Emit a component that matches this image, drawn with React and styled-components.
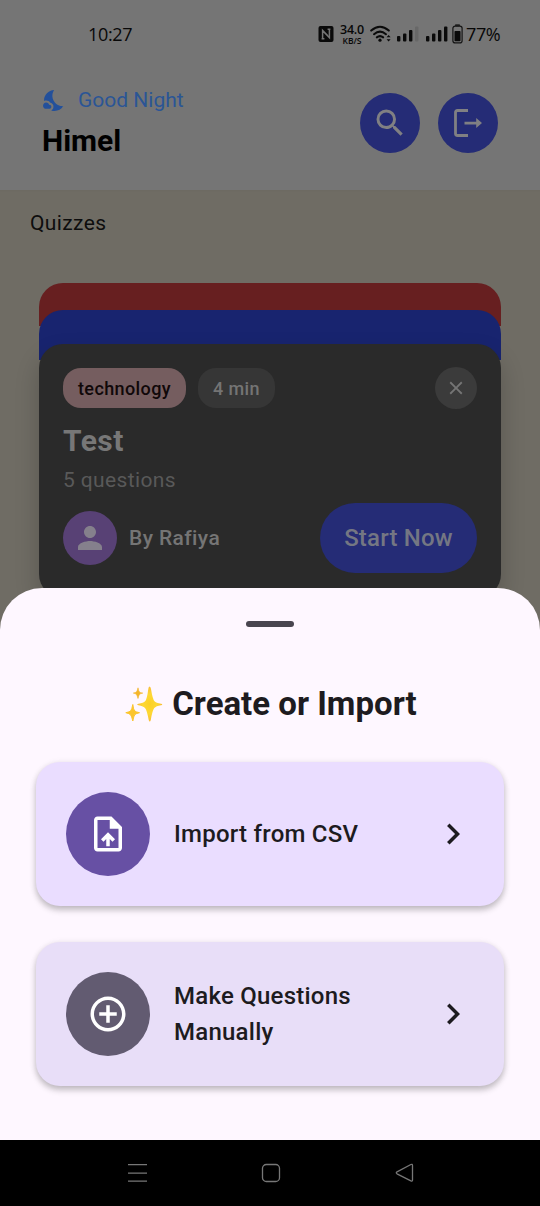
import React from "react";
import styled, { createGlobalStyle } from "styled-components";
import {
  MdSearch, MdNightsStay, MdPerson, MdClose,
  MdOutlineUploadFile, MdAddCircleOutline, MdChevronRight,
} from "react-icons/md";

const GlobalStyle = createGlobalStyle`
  * { box-sizing: border-box; }
  body { margin: 0; font-family: Roboto, "Liberation Sans", sans-serif; }
  svg { display: block; flex: none; }
`;

const Screen = styled.div`
  position: relative;
  width: 540px;
  height: 1206px;
  overflow: hidden;
  display: flex;
  flex-direction: column;
  background: #6f6c64;
`;

const Top = styled.header`
  height: 190px;
  flex: none;
  background: #757575;
  box-shadow: 0 0 3px rgba(0, 0, 0, 0.05);
`;

const StatusBar = styled.div`
  height: 68px;
  padding: 0 38px 0 88px;
  display: flex;
  align-items: center;
  justify-content: space-between;
  color: #080808;
`;

const Clock = styled.span`
  font: 500 18px/24px "Open Sans", Roboto, sans-serif;
  letter-spacing: -0.35px;
`;

const StatusIcons = styled.div`
  display: flex;
  align-items: center;
`;

const Speed = styled.div`
  width: 28px;
  margin: 1px 4px 0;
  display: flex;
  flex-direction: column;
  align-items: center;
  white-space: nowrap;
  font: 600 12.5px/12px "Open Sans", Roboto, sans-serif;
  letter-spacing: -0.2px;
`;

const SpeedUnit = styled.span`
  font-size: 8.5px;
  line-height: 9px;
  letter-spacing: 0;
`;

const Signals = styled.div`
  display: flex;
  gap: 7px;
  margin: 0 4px 0 5px;
`;

const Percent = styled.span`
  width: 36px;
  margin-left: 3px;
  white-space: nowrap;
  font: 400 18px/24px "Open Sans", Roboto, sans-serif;
  letter-spacing: -0.4px;
`;

const Greeting = styled.div`
  display: flex;
  justify-content: space-between;
  padding: 18px 42px 0;
`;

const GreetingLine = styled.div`
  display: flex;
  align-items: center;
  gap: 11px;
  height: 29px;
  color: #23509b;
  font-size: 21px;
  line-height: 29px;
  svg { margin-bottom: 1px; }
  span { color: #2b5595; }
`;

const UserName = styled.div`
  margin-top: 8px;
  color: #000;
  font-size: 30px;
  line-height: 36px;
  font-weight: 700;
`;

const HeaderActions = styled.div`
  display: flex;
  gap: 18px;
  padding-top: 6.5px;
`;

const RoundButton = styled.button`
  width: 60px;
  height: 60px;
  padding: 0;
  border: 0;
  border-radius: 50%;
  display: grid;
  place-items: center;
  background: #252c76;
  color: #808083;
`;

const SectionTitle = styled.h2`
  margin: 17px 0 0 30px;
  color: #0d0d0d;
  font-size: 21px;
  line-height: 32px;
  font-weight: 400;
  letter-spacing: 0.38px;
`;

const Deck = styled.div`
  margin: 44px 39px 0;
  display: flex;
  flex-direction: column;
`;

const DeckLayer = styled.div`
  height: ${(p) => p.$height}px;
  margin-bottom: ${(p) => p.$visible - p.$height}px;
  border-radius: 24px 24px 0 0;
  background: ${(p) => p.$color};
`;

const QuizCard = styled.article`
  height: 254px;
  padding: 23px 24px;
  border-radius: 24px;
  background: #2a2a2a;
  box-shadow: 0 12px 24px rgba(0, 0, 0, 0.2);
`;

const CardHead = styled.div`
  display: flex;
  align-items: center;
  gap: 12px;
`;

const Tag = styled.span`
  width: ${(p) => p.$width}px;
  height: 40px;
  border-radius: 18px;
  text-align: center;
  font-size: 18px;
  line-height: 41px;
  font-weight: 500;
  letter-spacing: 0.4px;
  color: ${(p) => (p.$muted ? "#747474" : "#100809")};
  background: ${(p) => (p.$muted ? "#363636" : "#755d5f")};
`;

const CloseButton = styled.button`
  width: 42px;
  height: 42px;
  margin-left: auto;
  padding: 0;
  border: 0;
  border-radius: 50%;
  display: grid;
  place-items: center;
  background: #3b3b3b;
  color: #757575;
`;

const QuizTitle = styled.h3`
  margin: 12px 0 0;
  color: #777;
  font-size: 30px;
  line-height: 40px;
  font-weight: 700;
  letter-spacing: 0.45px;
`;

const QuizMeta = styled.p`
  margin: 4px 0 0;
  color: #595959;
  font-size: 21px;
  line-height: 30px;
  letter-spacing: 0.38px;
`;

const CardFoot = styled.div`
  display: flex;
  align-items: center;
  margin-top: 8px;
`;

const Avatar = styled.div`
  width: 54px;
  height: 54px;
  border-radius: 50%;
  display: grid;
  place-items: center;
  background: #584175;
  color: #85808c;
`;

const Author = styled.span`
  margin-left: 12px;
  color: #757575;
  font-size: 21px;
  font-weight: 500;
  letter-spacing: 0.4px;
`;

const StartButton = styled.button`
  width: 157px;
  height: 70px;
  margin-left: auto;
  padding: 0;
  border: 0;
  border-radius: 35px;
  background: #252c76;
  color: #747783;
  font: 500 24px/70px Roboto, sans-serif;
  letter-spacing: 0.2px;
`;

const Sheet = styled.section`
  position: absolute;
  left: 0;
  right: 0;
  bottom: 66px;
  height: 552px;
  padding: 33px 36px 0;
  border-radius: 42px 42px 0 0;
  background: #fef7ff;
`;

const Handle = styled.div`
  width: 48px;
  height: 6px;
  margin: 0 auto;
  border-radius: 3px;
  background: #49454f;
`;

const SheetTitle = styled.h1`
  margin: 56px 0 37px;
  padding-left: 2px;
  display: flex;
  justify-content: center;
  align-items: center;
  gap: 9px;
  color: #1d1b20;
  font-size: 33px;
  line-height: 42px;
  font-weight: 700;
`;

const Option = styled.button`
  width: 100%;
  height: 144px;
  margin: 0 0 36px;
  padding: 0 30px;
  border: 0;
  border-radius: 24px;
  display: flex;
  align-items: center;
  text-align: left;
  background: ${(p) => p.$bg};
  color: #1d1b20;
  box-shadow: 0 4px 6px rgba(0, 0, 0, 0.22), 0 1px 7px rgba(0, 0, 0, 0.08);
`;

const OptionIcon = styled.span`
  width: 84px;
  height: 84px;
  flex: none;
  border-radius: 50%;
  display: grid;
  place-items: center;
  background: ${(p) => p.$bg};
  color: #fff;
`;

const OptionLabel = styled.span`
  flex: 1;
  padding: 0 24px 1px;
  font: 500 24px/36px Roboto, sans-serif;
  letter-spacing: 0.24px;
`;

const NavBar = styled.nav`
  position: absolute;
  left: 0;
  right: 0;
  bottom: 0;
  height: 66px;
  padding: 0 125px 0 127px;
  display: flex;
  align-items: center;
  justify-content: space-between;
  background: #000;
`;

const Nfc = () => (
  <svg width="16" height="16" viewBox="0 0 16 16">
    <rect x="0.500" width="15" height="16" rx="2" fill="#0a0a0a" />
    <path d="M4.600 12.800V4.300l5 5.200M11.400 3.200v8.500l-5-5.200M3.600 12.800h2.800M9.600 3.200h2.800" fill="none" stroke="#757575" strokeWidth="1.500" />
  </svg>
);

const Wifi = () => (
  <svg width="22" height="18" viewBox="0 0 22 18">
    <g fill="none" stroke="#0a0a0a" strokeWidth="2" strokeLinecap="round">
      <path d="M1.200 5.600Q10 -2.200 18.800 5.600" />
      <path d="M4 9.200Q10 4 16 9.200" />
      <path d="M6.800 12.400Q10 9.800 13.200 12.400" />
    </g>
    <circle cx="10" cy="15.200" r="1.600" fill="#0a0a0a" />
    <path d="M16.600 12.200l2-2.300 2 2.300zM16.600 14.300l2 2.300 2-2.300z" fill="#0a0a0a" />
  </svg>
);

const Signal = ({ bars }) => (
  <svg width="22" height="16" viewBox="0 0 22 16">
    {[10, 7.5, 4, 0.5].map((y, i) => (
      <rect key={y} x={i * 6} y={y} width="3.4" height={15.5 - y} rx="1" fill={i < bars ? "#0a0a0a" : "#686868"} />
    ))}
  </svg>
);

const Battery = () => (
  <svg width="11" height="20" viewBox="0 0 11 20">
    <rect x="3" y="0.300" width="5" height="2" rx="0.800" fill="#222" />
    <rect x="0.900" y="2.100" width="9.200" height="16.800" rx="2.200" fill="none" stroke="#151515" strokeWidth="1.200" />
    <rect x="2.500" y="7" width="6" height="10.300" rx="0.800" fill="#0a0a0a" />
  </svg>
);

const Logout = () => (
  <svg width="30" height="30" viewBox="0 0 30 30">
    <path d="M15 2.500H4.500Q2.500 2.500 2.500 4.500V25.500Q2.500 27.500 4.500 27.500H15" fill="none" stroke="#808083" strokeWidth="2.800" />
    <path d="M11.500 13.700h11.700V10l5.800 5.100-5.800 5v-3.600H11.500z" fill="#808083" />
  </svg>
);

const Sparkles = () => (
  <svg width="38" height="38" viewBox="0 0 38 38">
    <defs>
      <radialGradient id="gold">
        <stop offset="0" stopColor="#fbd027" />
        <stop offset="0.55" stopColor="#fdd835" />
        <stop offset="1" stopColor="#f8bd35" />
      </radialGradient>
    </defs>
    <path d="M24.500 1.500Q25.600 1.500 26 4Q27.700 14.500 29.500 16.300Q31 18 36 18.700Q38.500 19.400 36 20.200Q31 21 29.300 23Q27.300 25.500 25.800 35Q24.700 38 23.700 35Q22 25.500 20.200 23.200Q18.500 21 13.500 20.200Q11 19.400 13.500 18.700Q18.500 18 20.300 16Q22 14 23.300 4Q23.600 1.500 24.500 1.500Z" fill="url(#gold)" />
    <path d="M7.800 19.500Q8.500 25 9.800 26Q11 27 14.500 27.700Q11 28.500 9.800 29.600Q8.700 31 7.800 36Q6.700 31 5.500 29.700Q4.500 28.500 .8 27.700Q4.500 27 5.700 25.800Q6.900 24.500 7.800 19.500Z" fill="#fbc52d" stroke="#fbc52d" strokeWidth="1" strokeLinejoin="round" />
    <path d="M13 2.800Q13.700 6.300 14.500 7Q15.300 7.800 17.800 8.100Q15.300 8.600 14.500 9.400Q13.700 10.300 13 13.500Q12.200 10.300 11.400 9.400Q10.500 8.500 8.300 8.100Q10.700 7.700 11.500 6.800Q12.300 6 13 2.800Z" fill="#f4b52b" stroke="#f4b52b" strokeWidth=".6" strokeLinejoin="round" />
  </svg>
);

const MenuKey = () => (
  <svg width="20" height="20" viewBox="0 0 20 20" fill="none" stroke="#777" strokeWidth="1.300">
    <path d="M1 1.700h19M1 10.200h19M1 18.200h19" />
  </svg>
);

const HomeKey = () => (
  <svg width="20" height="20" viewBox="0 0 20 20" fill="none" stroke="#777" strokeWidth="1.300">
    <rect x="1.500" y="1.500" width="17" height="17" rx="3.800" />
  </svg>
);

const BackKey = () => (
  <svg width="20" height="20" viewBox="0 0 20 20" fill="none" stroke="#777" strokeWidth="1.300" strokeLinejoin="round">
    <path d="M15.900 1.500Q17.500 .8 17.500 2.500V17Q17.500 18.600 15.900 17.900L2 10.800Q.6 9.800 2 8.800Z" />
  </svg>
);

export default function App() {
  return (
    <Screen>
      <GlobalStyle />
      <Top>
        <StatusBar>
          <Clock>10:27</Clock>
          <StatusIcons>
            <Nfc />
            <Speed><span>34.0</span><SpeedUnit>KB/S</SpeedUnit></Speed>
            <Wifi />
            <Signals>
              <Signal bars={3} />
              <Signal bars={4} />
            </Signals>
            <Battery />
            <Percent>77%</Percent>
          </StatusIcons>
        </StatusBar>
        <Greeting>
          <div>
            <GreetingLine><MdNightsStay size={25} /><span>Good Night</span></GreetingLine>
            <UserName>Himel</UserName>
          </div>
          <HeaderActions>
            <RoundButton aria-label="Search"><MdSearch size={36} /></RoundButton>
            <RoundButton aria-label="Log out"><Logout /></RoundButton>
          </HeaderActions>
        </Greeting>
      </Top>
      <SectionTitle>Quizzes</SectionTitle>
      <Deck>
        <DeckLayer $color="#671f20" $height={43} $visible={27} />
        <DeckLayer $color="#18246f" $height={50} $visible={34} />
        <QuizCard>
          <CardHead>
            <Tag $width={123}>technology</Tag>
            <Tag $width={77} $muted>4 min</Tag>
            <CloseButton aria-label="Close"><MdClose size={22} /></CloseButton>
          </CardHead>
          <QuizTitle>Test</QuizTitle>
          <QuizMeta>5 questions</QuizMeta>
          <CardFoot>
            <Avatar><MdPerson size={36} /></Avatar>
            <Author>By Rafiya</Author>
            <StartButton>Start Now</StartButton>
          </CardFoot>
        </QuizCard>
      </Deck>
      <Sheet>
        <Handle />
        <SheetTitle><Sparkles />Create or Import</SheetTitle>
        <Option $bg="#eaddff">
          <OptionIcon $bg="#6750a4"><MdOutlineUploadFile size={42} /></OptionIcon>
          <OptionLabel>Import from CSV</OptionLabel>
          <MdChevronRight size={42} />
        </Option>
        <Option $bg="#e8def8">
          <OptionIcon $bg="#625b71"><MdAddCircleOutline size={42} /></OptionIcon>
          <OptionLabel>Make Questions Manually</OptionLabel>
          <MdChevronRight size={42} />
        </Option>
      </Sheet>
      <NavBar><MenuKey /><HomeKey /><BackKey /></NavBar>
    </Screen>
  );
}
